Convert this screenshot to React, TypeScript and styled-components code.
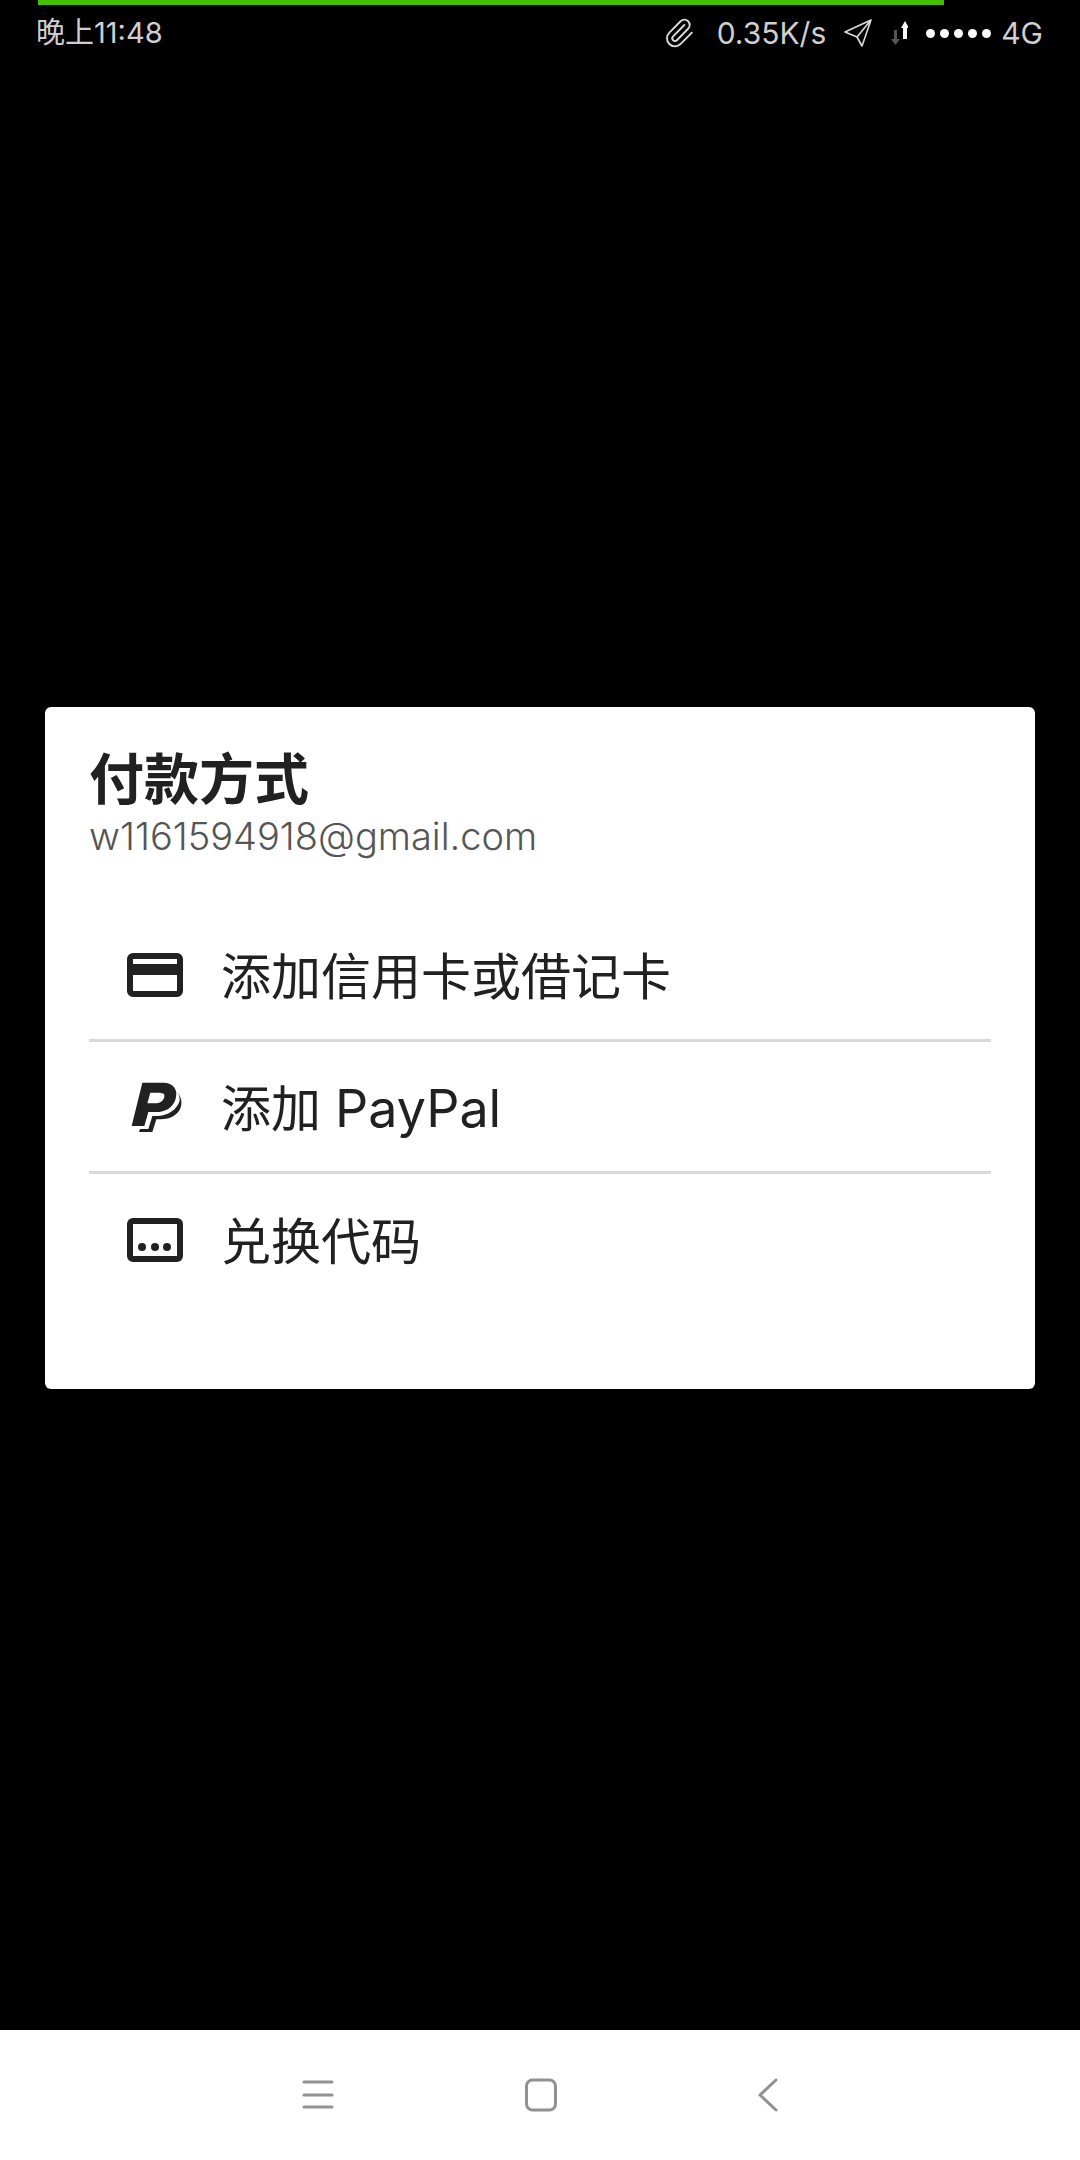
import React from 'react'
import styled, { createGlobalStyle } from 'styled-components'
import { Paperclip } from 'lucide-react'

const FONT = `Inter, "Noto Sans CJK SC", sans-serif`

const GlobalStyle = createGlobalStyle`
  html, body { margin: 0; padding: 0; background: #000; }
  * { box-sizing: border-box; }
  body { font-family: ${FONT}; }
`

const Page = styled.div`
  width: 1080px;
  height: 2160px;
  display: flex;
  flex-direction: column;
  background: #000;
  overflow: hidden;
`

const Progress = styled.div`
  width: 906px;
  height: 5px;
  margin-left: 38px;
  background: #43c000;
`

const StatusBar = styled.div`
  height: 56px;
  padding: 0 37px 0 36px;
  display: flex;
  align-items: center;
  color: #cfcfcf;
  font-size: 30px;
  font-weight: 400;
`

const StatusTime = styled.span`
  flex: 1;
  font-size: 29px;
  line-height: 36px;
`

const StatusItem = styled.div<{ $left: number }>`
  display: flex;
  align-items: center;
  line-height: 36px;
  margin-left: ${p => p.$left}px;
`

const Dots = styled.div`
  display: flex;
  gap: 5px;
  margin-left: 18px;
`

const Dot = styled.i`
  display: block;
  width: 9px;
  height: 9px;
  border-radius: 50%;
  background: #fff;
`

const Main = styled.main`
  flex: 1;
  padding: 646px 45px 0;
`

const Card = styled.section`
  height: 682px;
  background: #fff;
  border-radius: 6px;
  padding: 40px 44px 0;
`

const Title = styled.h1`
  margin: 0;
  font-size: 55px;
  line-height: 64px;
  font-weight: 700;
  color: #212121;
`

const Email = styled.p`
  margin: 3px 0 0;
  font-size: 38px;
  line-height: 44px;
  font-weight: 300;
  color: #555;
`

const List = styled.ul`
  list-style: none;
  margin: 52px 0 0;
  padding: 0;
`

const Row = styled.li`
  height: 132px;
  padding-left: 38px;
  display: flex;
  align-items: center;
  gap: 38px;
  font-size: 50px;
  line-height: 60px;
  font-weight: 400;
  color: #212121;
  border-bottom: 3px solid #d9d9d9;
  &:last-child { border-bottom: none; }
`

const RowIcon = styled.svg`
  width: 56px;
  height: 52px;
  flex: none;
  display: block;
  overflow: visible;
`

const RowLabel = styled.span`
  display: block;
  margin-top: 4px;
`

const LatinName = styled.span`
  font-size: 52px;
`

const Nav = styled.nav`
  height: 130px;
  flex: none;
  background: #fff;
  display: flex;
  align-items: center;
  padding: 0 0 0 302px;
`

const NavIcon = styled.svg<{ $left?: number }>`
  width: 32px;
  height: 34px;
  display: block;
  margin-left: ${p => p.$left ?? 0}px;
  fill: none;
  stroke: #919191;
  stroke-width: 3;
  stroke-linecap: round;
  stroke-linejoin: round;
`

export default function App() {
  return (
    <Page>
      <GlobalStyle />
      <Progress />
      <StatusBar>
        <StatusTime>晚上11:48</StatusTime>
        <StatusItem $left={0}>
          <Paperclip size={32} strokeWidth={1.4} color="#dcdcdc" />
        </StatusItem>
        <StatusItem $left={22}>0.35K/s</StatusItem>
        <StatusItem $left={17}>
          <svg width="30" height="28" viewBox="0 0 30 28" fill="none" stroke="#dcdcdc" strokeWidth="1.6" strokeLinejoin="round">
            <path d="M28 1 L2 13 L14 18 L19 27 Z M14 18 L28 1" />
          </svg>
        </StatusItem>
        <StatusItem $left={17}>
          <svg width="18" height="26" viewBox="0 0 18 26">
            <path d="M4 10 h3 v9 h3 l-4.500 6 l-4.500 -6 h3 Z" fill="#555" />
            <path d="M13 8 h4 v11 h-4 Z M15 1 l4 7 h-8 Z" fill="#fff" />
          </svg>
        </StatusItem>
        <Dots>
          <Dot /><Dot /><Dot /><Dot /><Dot />
        </Dots>
        <StatusItem $left={10}>4G</StatusItem>
      </StatusBar>
      <Main>
        <Card>
          <Title>付款方式</Title>
          <Email>w1161594918@gmail.com</Email>
          <List>
            <Row>
              <RowIcon viewBox="0 0 56 52">
                <path fillRule="evenodd" fill="#212121" d="M6 4 H50 a6 6 0 0 1 6 6 V42 a6 6 0 0 1 -6 6 H6 a6 6 0 0 1 -6 -6 V10 a6 6 0 0 1 6 -6 Z M6 10 V15 H50 V10 Z M6 26 V42 H50 V26 Z" />
              </RowIcon>
              <RowLabel>添加信用卡或借记卡</RowLabel>
            </Row>
            <Row>
              <RowIcon viewBox="82 65 168 156">
                <path fillRule="evenodd" fill="#212121" d="M128 70 L190 70 C222 70 236 92 228 118 C220 146 196 158 170 158 L146 158 L134 200 L96 200 Z M152 100 L143 132 L165 132 C180 132 192 125 194 112 C196 102 188 100 175 100 Z" />
                <path fill="#212121" d="M232 98 C250 115 252 150 225 168 C210 180 190 180 170 180 L158 218 L118 218 L121 209 L146 209 L158 170 L172 170 C205 170 232 150 240 125 C241 115 238 105 232 98 Z" />
              </RowIcon>
              <RowLabel>添加 <LatinName>PayPal</LatinName></RowLabel>
            </Row>
            <Row>
              <RowIcon viewBox="0 0 56 52">
                <path fillRule="evenodd" fill="#212121" d="M6 4 H50 a6 6 0 0 1 6 6 V42 a6 6 0 0 1 -6 6 H6 a6 6 0 0 1 -6 -6 V10 a6 6 0 0 1 6 -6 Z M6 10 V42 H50 V10 Z" />
                <circle cx="15" cy="33" r="4" fill="#212121" />
                <circle cx="28" cy="33" r="4" fill="#212121" />
                <circle cx="40" cy="33" r="4" fill="#212121" />
              </RowIcon>
              <RowLabel>兑换代码</RowLabel>
            </Row>
          </List>
        </Card>
      </Main>
      <Nav>
        <NavIcon viewBox="0 0 32 34">
          <path d="M2 4 H30 M2 17 H30 M2 29 H30" />
        </NavIcon>
        <NavIcon viewBox="0 0 32 34" $left={191}>
          <rect x="1.500" y="2" width="29" height="30" rx="6" />
        </NavIcon>
        <NavIcon viewBox="0 0 32 34" $left={195}>
          <path d="M24 2 L8 17 L24 32" />
        </NavIcon>
      </Nav>
    </Page>
  )
}
